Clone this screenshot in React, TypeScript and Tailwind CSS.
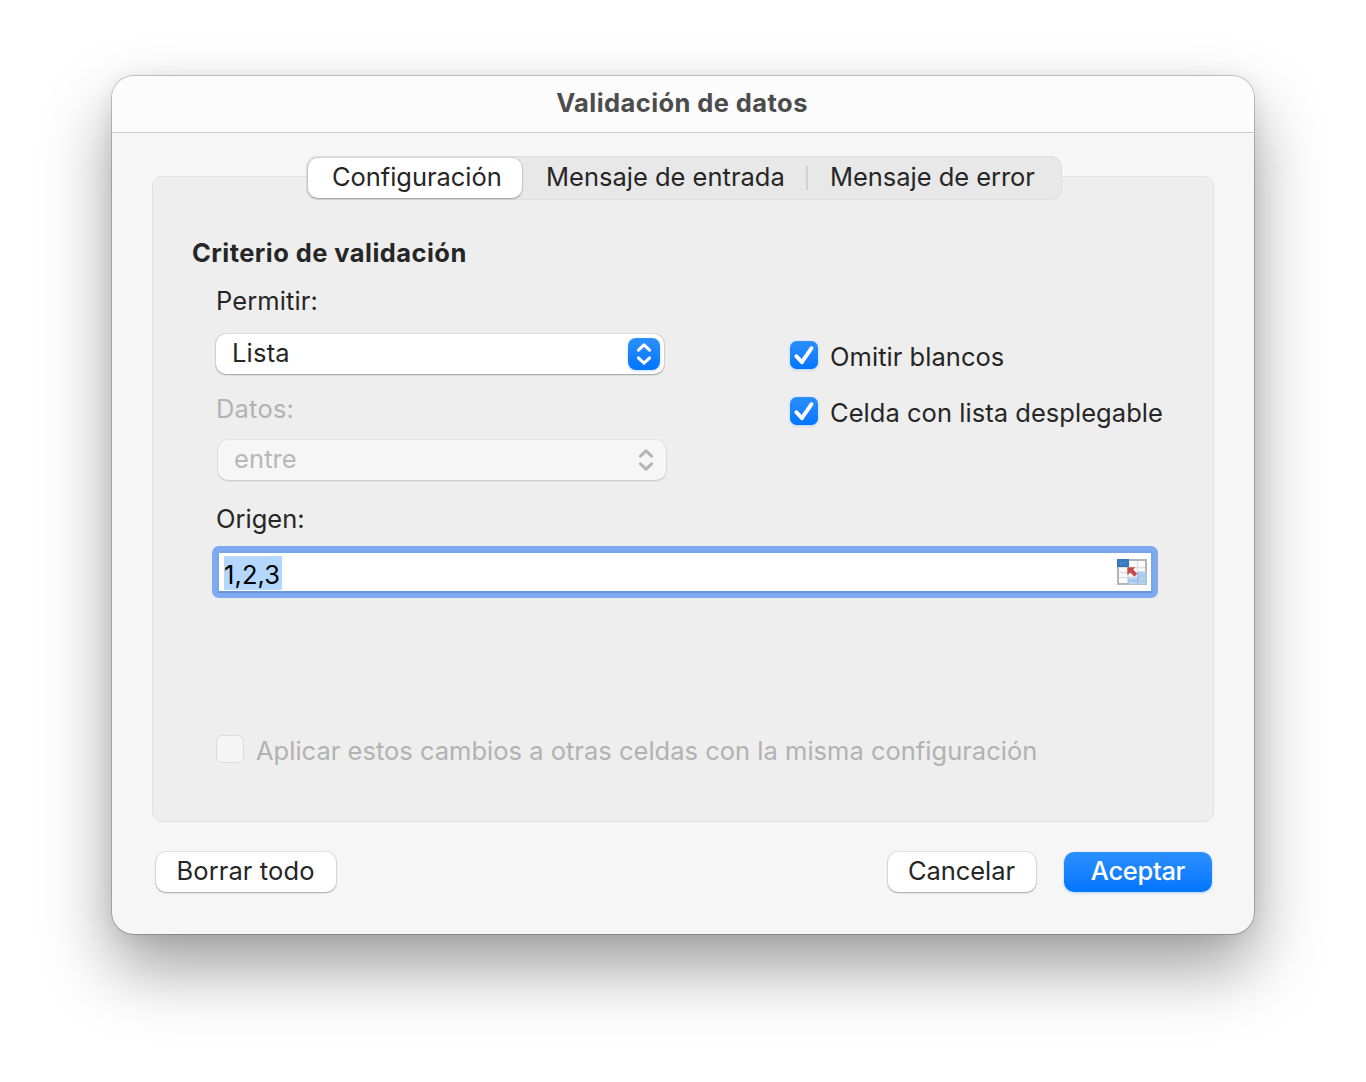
import type { ReactNode } from "react";

function Chevrons({ className }: { className: string }) {
  return (
    <svg viewBox="0 0 32 32" className={`size-8 ${className}`} fill="none" stroke="currentColor" strokeWidth="3" strokeLinecap="round" strokeLinejoin="round">
      <path d="M10.400 12.200 16 6.800l5.600 5.400M10.400 19.800 16 25.200l5.600-5.400" />
    </svg>
  );
}

function CheckedBox() {
  return (
    <span className="size-7 shrink-0 rounded-[6.500px] bg-linear-to-b from-[#2a8fff] to-[#0075ff] shadow-[0_1px_3px_rgba(0,122,255,0.25)]">
      <svg viewBox="0 0 28 28" className="size-7" fill="none" stroke="white" strokeWidth="3.900" strokeLinecap="round" strokeLinejoin="round">
        <path d="M6.300 15.200 11.900 21.200 21.500 7.200" />
      </svg>
    </span>
  );
}

function Option({ children }: { children: ReactNode }) {
  return (
    <label className="flex h-7 gap-3">
      <CheckedBox />
      <span className="relative top-0.5 leading-7 whitespace-nowrap tracking-[0.04px]">{children}</span>
    </label>
  );
}

function RangeIcon() {
  return (
    <svg viewBox="0 0 30 26" className="h-[26px] w-[30px] shrink-0">
      <rect width="30" height="26" fill="#b4b6b8" />
      <rect x="2" y="2" width="26" height="22" fill="#fbfbfb" />
      <path d="M2 8.500h26M2 13.500h26M2 18.500h26M11.500 2v22M20.500 2v22" stroke="#dcdedf" strokeWidth="1.300" />
      <rect width="12" height="8" fill="#3478bd" />
      <path d="M2 3.500h8M3 5h6" stroke="#5d95cd" strokeWidth="0.800" strokeDasharray="2 1" />
      <path d="M21 12.500h8.500v13h-19v-7H21z" fill="#a9c9ea" />
      <path d="M12 19.500h8M22 14h6M22 19.500h6M12 24h16" stroke="#c5daf1" />
      <path d="M20.700 13v12" stroke="#91b8e0" />
      <path d="M10.300 8.300h8l-2.100 2.300 4 4.200-2.800 2.900-4.200-4.200-2.900 2.700z" fill="#c9484b" />
    </svg>
  );
}

const raised = "bg-white shadow-[0_0_0_1px_rgba(0,0,0,0.07),0_1px_2px_rgba(0,0,0,0.28)]";

export default function App() {
  return (
    <div className="h-[1082px] w-[1366px] overflow-hidden bg-white pt-[76px] pl-28 font-['Inter',sans-serif] text-[25.5px] text-[#262626]">
      <main className="h-[858px] w-[1142px] rounded-[22px] bg-[#f6f6f6] shadow-[0_0_0_1px_rgba(0,0,0,0.2),0_34px_68px_rgba(0,0,0,0.38),0_2px_20px_rgba(0,0,0,0.08)]">
        <header className="flex h-[57px] items-center justify-center rounded-t-[22px] border-b border-[#cfcfcf] bg-[#fcfcfc] pb-0.5">
          <h1 className="pr-0.5 font-bold leading-8 tracking-[0.42px] text-[#4c4c4c]">Validación de datos</h1>
        </header>

        <div className="px-10 pt-[23px]">
          <nav className="relative z-10 ml-[154px] flex h-11 w-[756px] items-center rounded-[11px] border border-[#dedede] bg-[#e8e8e8] leading-8">
            <button className={`-mr-px ml-px h-10 w-[214px] rounded-[10px] pb-0.5 pl-[24px] text-left leading-[38px] tracking-[-0.05px] ${raised}`}>Configuración</button>
            <button className="h-10 w-[285px] pb-0.5 pl-[25px] text-left leading-[38px] whitespace-nowrap">Mensaje de entrada</button>
            <span className="h-6 w-0.5 bg-[#d2d2d2]" />
            <button className="h-10 flex-1 pb-0.5 pl-[22px] text-left leading-[38px] tracking-[-0.04px] whitespace-nowrap">Mensaje de error</button>
          </nav>

          <section className="-mt-6 h-[646px] rounded-[10px] border border-[#e2e2e2] bg-[#eeeeee] pt-[60px] pl-[39px]">
            <h2 className="h-8 font-bold leading-8 tracking-[0.44px]">Criterio de validación</h2>
            <div className="mt-4 flex">
              <div className="w-[598px] pl-6">
                <div className="h-8 leading-8 tracking-[0.1px]">Permitir:</div>
                <div className={`mt-[17px] flex h-10 w-[448px] justify-between rounded-[10px] pl-4 ${raised}`}>
                  <span className="leading-[38px] tracking-[0.2px]">Lista</span>
                  <span className="mt-1 mr-1 size-8 rounded-[8px] bg-linear-to-b from-[#2a8fff] to-[#0075ff] shadow-[0_1px_3px_rgba(0,122,255,0.25)]">
                    <Chevrons className="text-white" />
                  </span>
                </div>
                <div className="mt-[19px] h-8 leading-8 tracking-[0.2px] text-[#b2b2b2]">Datos:</div>
                <div className="mt-[15px] ml-0.5 flex h-10 w-[448px] justify-between rounded-[10px] bg-[#f6f6f6] pl-4 text-[#b7b7b7] shadow-[0_0_0_1px_rgba(0,0,0,0.04),0_1px_2px_rgba(0,0,0,0.14)]">
                  <span className="leading-[38px] tracking-[0.1px]">entre</span>
                  <Chevrons className="mt-1 mr-1 text-[#b5b5b5]" />
                </div>
                <div className="mt-[23px] h-8 leading-8">Origen:</div>
              </div>
              <div className="flex flex-col gap-7 pt-14">
                <Option>Omitir blancos</Option>
                <Option>Celda con lista desplegable</Option>
              </div>
            </div>

            <div className="mt-[11px] ml-5 h-[52px] w-[946px] rounded-[7px] bg-[#7eabf0] p-[5px]">
              <div className="flex h-[42px] justify-between border-2 border-[#78a5eb] border-b-[#6796dc] bg-white pr-1">
                <span className="mt-[3px] ml-[5px] h-[34px] w-[58px] bg-[#b3d7ff] leading-[37px] tracking-[0.1px] text-black">1,2,3</span>
                <span className="mt-[6px]"><RangeIcon /></span>
              </div>
            </div>

            <label className="mt-[137px] ml-6 flex h-7 gap-3 text-[#b2b2b2]">
              <span className="size-7 rounded-[6.500px] border border-[#dbdbdb] bg-[#f5f5f5]" />
              <span className="relative top-0.5 leading-7 whitespace-nowrap tracking-[0.01px]">Aplicar estos cambios a otras celdas con la misma configuración</span>
            </label>
          </section>

          <footer className="mt-[30px] flex gap-7 pr-0.5 pl-1">
            <button className={`mr-auto h-10 w-[180px] rounded-[10px] pr-px pb-0.5 leading-[38px] tracking-[0.1px] ${raised}`}>Borrar todo</button>
            <button className={`h-10 w-[148px] rounded-[10px] pr-px pb-0.5 leading-[38px] tracking-[-0.05px] ${raised}`}>Cancelar</button>
            <button className="h-10 w-[148px] rounded-[10px] bg-linear-to-b from-[#2a8fff] to-[#0075ff] pb-0.5 font-medium leading-[38px] tracking-[-0.3px] text-white shadow-[0_1px_3px_rgba(0,122,255,0.3)]">Aceptar</button>
          </footer>
        </div>
      </main>
    </div>
  );
}
